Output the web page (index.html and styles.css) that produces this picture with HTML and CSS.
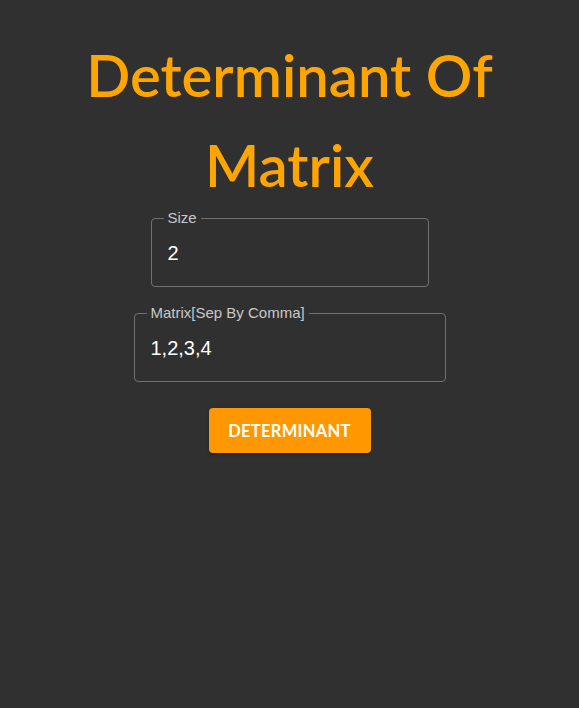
FILE: index.html
```html
<!DOCTYPE html>
<html>
<head>
<meta charset="utf-8">
<link rel="stylesheet" href="styles.css">
</head>
<body>
<main class="app">
  <h1 class="title">Determinant Of Matrix</h1>
  <form class="form">
    <fieldset class="field field-size">
      <legend class="field-label">Size</legend>
      <input class="field-input" type="text" value="2">
    </fieldset>
    <fieldset class="field field-matrix">
      <legend class="field-label">Matrix[Sep By Comma]</legend>
      <input class="field-input" type="text" value="1,2,3,4">
    </fieldset>
    <button class="btn" type="button">Determinant</button>
  </form>
</main>
</body>
</html>
```
FILE: styles.css
```css
html, body {
  margin: 0;
  padding: 0;
  background: #303030;
  height: 100%;
}
.app {
  display: flex;
  flex-direction: column;
  align-items: center;
  padding-top: 30px;
}
.title {
  margin: 0;
  width: 440px;
  text-align: center;
  font-family: Lato, "Open Sans", sans-serif;
  font-weight: 600;
  font-size: 58px;
  line-height: 90px;
  color: #ffa500;
}
.form {
  display: flex;
  flex-direction: column;
  align-items: center;
  margin-top: 2px;
}
.field {
  margin: 0;
  padding: 0 16px;
  border: 1px solid #707070;
  border-radius: 4px;
  height: 75px;
  box-sizing: border-box;
  font-family: "Liberation Sans", Arial, sans-serif;
}
.field-size { width: 278px; }
.field-matrix { width: 312px; margin-top: 20px; }
.field-label {
  padding: 0 4px;
  margin-left: -4px;
  font-size: 15px;
  line-height: 12px;
  color: #c8c8c8;
}
.field-input {
  display: block;
  width: 100%;
  border: none;
  outline: none;
  background: transparent;
  padding: 0;
  margin-top: 17px;
  font-family: "Liberation Sans", Arial, sans-serif;
  font-size: 20px;
  line-height: 24px;
  color: #ffffff;
}
.btn {
  margin-top: 26px;
  width: 162px;
  height: 45px;
  border: none;
  border-radius: 4px;
  background: #ff9800;
  color: #ffffff;
  font-family: Lato, "Open Sans", sans-serif;
  font-weight: 700;
  font-size: 16.5px;
  text-transform: uppercase;
  letter-spacing: 0.3px;
  box-shadow: 0 3px 1px -2px rgba(0,0,0,0.2), 0 2px 2px 0 rgba(0,0,0,0.14), 0 1px 5px 0 rgba(0,0,0,0.12);
  cursor: pointer;
}
```
